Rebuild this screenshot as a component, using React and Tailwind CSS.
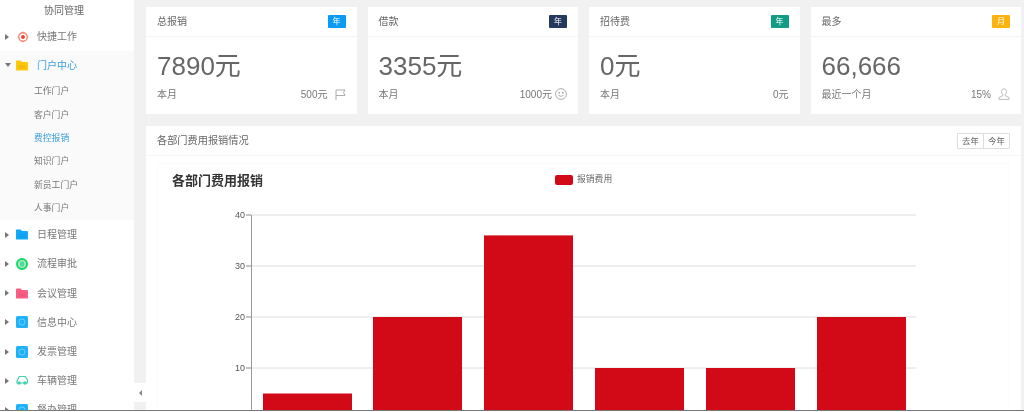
import { Fragment } from 'react';

const FONT = "font-['Liberation_Sans','Noto_Sans_CJK_SC',sans-serif]";

const FolderIcon = ({ color }) => (
  <svg width="12" height="11" viewBox="0 0 13 11">
    <path d="M0 1 Q0 0 1 0 H5 L6.500 1.800 H12 Q13 1.800 13 2.800 V10 Q13 11 12 11 H1 Q0 11 0 10 Z" fill={color} />
    <rect x="3" y="5" width="7" height="4" fill="#000" opacity="0.05" />
  </svg>
);

const TargetIcon = () => (
  <svg width="12" height="12" viewBox="0 0 13 13" className="ml-[1px]">
    <circle cx="6.500" cy="6.500" r="4.600" fill="none" stroke="#f8806f" strokeWidth="1.400" />
    <circle cx="6.500" cy="6.500" r="2.100" fill="#ee3f2f" />
    <path d="M6.500 0.500V2M6.500 11V12.500M0.500 6.500H2M11 6.500H12.500" stroke="#f8806f" strokeWidth="0.800" />
  </svg>
);

const FlowIcon = () => (
  <svg width="12" height="12" viewBox="0 0 12 12">
    <circle cx="6" cy="6" r="5" fill="#a7e8c4" stroke="#12d964" strokeWidth="2" />
    <rect x="4" y="3.500" width="4" height="5" rx="1" fill="#4fdc8d" />
  </svg>
);

const SquareIcon = () => (
  <svg width="12" height="12" viewBox="0 0 12 12">
    <rect width="12" height="12" rx="1.500" fill="#1fb2f7" />
    <circle cx="6" cy="6" r="3" fill="none" stroke="#7fd3f9" strokeWidth="0.800" />
  </svg>
);

const CarIcon = () => (
  <svg width="12" height="9" viewBox="0 0 12 9">
    <path d="M1 5 L3 1 Q3.400 0.400 4 0.400 H8.500 Q9.200 0.400 9.600 1 L11.500 4 V7 H1 Z" fill="none" stroke="#45d0ab" strokeWidth="1.200" />
    <circle cx="3" cy="7" r="1.800" fill="#45d0ab" />
    <circle cx="9" cy="7" r="1.800" fill="#45d0ab" />
  </svg>
);

const Caret = ({ open }) =>
  open ? (
    <span className="w-0 h-0 border-x-[3px] border-x-transparent border-t-[4px] border-t-[#777]" />
  ) : (
    <span className="w-0 h-0 border-y-[3px] border-y-transparent border-l-[4px] border-l-[#777]" />
  );

const MenuRow = ({ label, icon, open, height = 'h-[29.2px]', active }) => (
  <div className={`flex items-center shrink-0 ${height}`}>
    <span className="w-[16px] pl-[5px] flex items-center">
      <Caret open={open} />
    </span>
    <span className="w-[21px] flex items-center">{icon}</span>
    <span className={`text-[10px] ${active ? 'text-[#3a9fdc]' : 'text-[#777]'}`}>{label}</span>
  </div>
);

const subItems = ['工作门户', '客户门户', '费控报销', '知识门户', '新员工门户', '人事门户'];

const lowerMenu = [
  { label: '日程管理', icon: <FolderIcon color="#0fa9f7" /> },
  { label: '流程审批', icon: <FlowIcon /> },
  { label: '会议管理', icon: <FolderIcon color="#f95f84" /> },
  { label: '信息中心', icon: <SquareIcon /> },
  { label: '发票管理', icon: <SquareIcon /> },
  { label: '车辆管理', icon: <CarIcon /> },
  { label: '督办管理', icon: <SquareIcon /> },
];

const FlagIcon = () => (
  <svg width="11" height="11" viewBox="0 0 11 11" fill="none" stroke="#999" strokeWidth="0.800">
    <path d="M1 11V1H10L8.500 3.500L10 6.500H1" />
  </svg>
);

const SmileIcon = () => (
  <svg width="12" height="12" viewBox="0 0 12 12" fill="none" stroke="#999" strokeWidth="0.800">
    <circle cx="6" cy="6" r="5.400" />
    <circle cx="4.200" cy="4.800" r="0.500" fill="#999" />
    <circle cx="7.800" cy="4.800" r="0.500" fill="#999" />
    <path d="M3.500 7.200Q6 9.600 8.500 7.200" />
  </svg>
);

const UserIcon = () => (
  <svg width="12" height="12" viewBox="0 0 12 12" fill="none" stroke="#aaa" strokeWidth="0.800">
    <path d="M6 0.800C4.400 0.800 3.600 2 3.600 3.500C3.600 5 4.200 6 4.800 6.600V7.600L1 9.500V11.400H11V9.500L7.200 7.600V6.600C7.800 6 8.400 5 8.400 3.500C8.400 2 7.600 0.800 6 0.800Z" />
  </svg>
);

const cards = [
  { title: '总报销', badge: '年', badgeClass: 'bg-[#0b9bf5]', value: '7890元', period: '本月', note: '500元', icon: <FlagIcon />, gap: 'gap-[7px]' },
  { title: '借款', badge: '年', badgeClass: 'bg-[#233a5c]', value: '3355元', period: '本月', note: '1000元', icon: <SmileIcon />, gap: 'gap-[3px]' },
  { title: '招待费', badge: '年', badgeClass: 'bg-[#129c85]', value: '0元', period: '本月', note: '0元' },
  { title: '最多', badge: '月', badgeClass: 'bg-[#fcb30f]', value: '66,666', period: '最近一个月', note: '15%', icon: <UserIcon />, gap: 'gap-[7px]' },
];

const StatCard = ({ title, badge, badgeClass, value, period, note, icon, gap }) => (
  <div className="bg-white h-[107px] flex flex-col">
    <div className="h-[30px] px-[11px] flex items-center justify-between border-b border-[#f4f4f4]">
      <span className="text-[10px] text-[#666]">{title}</span>
      <span className={`w-[18px] h-[13px] rounded-[1px] text-[8px] leading-[13px] text-center text-white ${badgeClass}`}>{badge}</span>
    </div>
    <div className="px-[11px] pt-[14px]">
      <div className="text-[26px] leading-[30px] text-[#666]">{value}</div>
      <div className="mt-[6px] flex items-center justify-between h-[14px] text-[10px] text-[#777]">
        <span>{period}</span>
        <span className={`flex items-center ${gap}`}>
          {note}
          {icon}
        </span>
      </div>
    </div>
  </div>
);

const bars = [
  { x: 263, v: 5 },
  { x: 373, v: 20 },
  { x: 484, v: 36 },
  { x: 595, v: 10 },
  { x: 706, v: 10 },
  { x: 817, v: 20 },
];

// y for a value, 40 sits at 215 and each 10 is 51px; svg starts at y=205 and x=158
const yOf = (v) => 10 + (40 - v) * 5.1;

const BarChart = () => (
  <svg width="853" height="230" viewBox="158 0 853 230" className="block">
    {[40, 30, 20, 10].map((v) => (
      <Fragment key={v}>
        <line x1="246" x2="916" y1={yOf(v)} y2={yOf(v)} stroke="#dedede" />
        <line x1="246" x2="251" y1={yOf(v)} y2={yOf(v)} stroke="#999" />
        <text x="245" y={yOf(v) + 3} textAnchor="end" fontSize="9" fill="#555">
          {v}
        </text>
      </Fragment>
    ))}
    <line x1="251.500" x2="251.500" y1="10" y2="230" stroke="#999" />
    {bars.map((b) => (
      <rect key={b.x} x={b.x} y={yOf(b.v)} width="89" height={230 - yOf(b.v)} fill="#d20a17" />
    ))}
  </svg>
);

export default function App() {
  return (
    <div className={`h-[412px] w-[1024px] overflow-hidden bg-white blur-[0.5px] ${FONT}`}>
      <div className="h-[410px] flex overflow-hidden border-b border-[#777] box-content bg-[#f1f1f1] relative">
        <aside className="w-[134px] shrink-0 bg-white flex flex-col overflow-hidden">
          <div className="h-[22px] shrink-0 pt-[4px] pl-[44px] text-[10px] leading-[14px] text-[#666]">协同管理</div>
          <MenuRow label="快捷工作" icon={<TargetIcon />} />
          <div className="bg-[#fafafa] shrink-0 pb-[1px]">
            <MenuRow label="门户中心" icon={<FolderIcon color="#fdc70c" />} open active height="h-[28px]" />
            {subItems.map((item) => (
              <div key={item} className={`h-[23.33px] leading-[25px] pl-[34px] text-[8.800px] ${item === '费控报销' ? 'text-[#3a9fdc]' : 'text-[#777]'}`}>
                {item}
              </div>
            ))}
          </div>
          {lowerMenu.map((m) => (
            <MenuRow key={m.label} label={m.label} icon={m.icon} />
          ))}
        </aside>

        {/* collapse tab on the gray rail */}
        <div className="absolute left-[134px] top-[383px] w-[12px] h-[19px] bg-white flex items-center justify-center">
          <span className="w-0 h-0 border-y-[3px] border-y-transparent border-r-[3px] border-r-[#888]" />
        </div>

        <main className="flex-1 pl-[12px] pr-[3px] pt-[7px] min-w-0">
          <div className="grid grid-cols-4 gap-[11px]">
            {cards.map((c) => (
              <StatCard key={c.title} {...c} />
            ))}
          </div>
          <section className="mt-[12px] bg-white h-[400px]">
            <div className="h-[30px] pl-[11px] pr-[11px] flex items-center justify-between border-b border-[#f6f6f6]">
              <span className="text-[10.200px] text-[#666]">各部门费用报销情况</span>
              <div className="flex h-[16px] border border-[#ddd] rounded-[1px] text-[8.500px] leading-[14px] text-[#666]">
                <span className="w-[26px] text-center border-r border-[#ddd]">去年</span>
                <span className="w-[25px] text-center">今年</span>
              </div>
            </div>
            <div className="mx-[11px] mt-[7px] border border-[#fbfbfb]">
              <div className="h-[34px] mb-[7px] pl-[14px] flex items-center">
                <span className="text-[13px] font-bold text-[#333] w-[383px]">各部门费用报销</span>
                <span className="w-[18px] h-[10px] rounded-[2px] bg-[#d20a17] -mt-[2px]" />
                <span className="ml-[4px] text-[8.800px] text-[#666] -mt-[2px]">报销费用</span>
              </div>
              <BarChart />
            </div>
          </section>
        </main>
      </div>
    </div>
  );
}
